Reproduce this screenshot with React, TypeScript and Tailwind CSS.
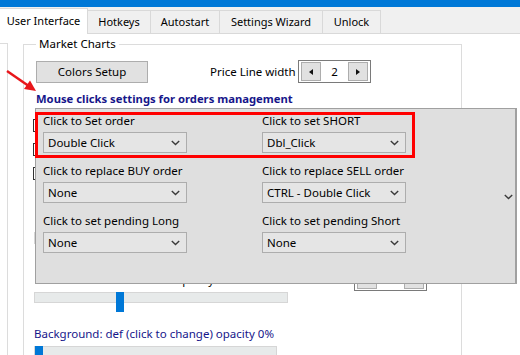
import React from 'react';

const tabs = [
  { label: 'User Interface', w: 'w-[88px]' },
  { label: 'Hotkeys', w: 'w-[63px]' },
  { label: 'Autostart', w: 'w-[69px]' },
  { label: 'Settings Wizard', w: 'w-[103px]' },
  { label: 'Unlock', w: 'w-[58px]' },
];

const rows = [
  ['Click to Set order', 'Double Click', 'Click to set SHORT', 'Dbl_Click'],
  ['Click to replace BUY order', 'None', 'Click to replace SELL order', 'CTRL - Double Click'],
  ['Click to set pending Long', 'None', 'Click to set pending Short', 'None'],
];

const Chevron = () => (
  <svg width="9" height="6" viewBox="0 0 9 6" className="shrink-0">
    <path d="M0.8 1 L4.5 4.6 L8.2 1" fill="none" stroke="#3a3a3a" strokeWidth="1.4" />
  </svg>
);

const Combo = ({ value }: { value: string }) => (
  <div className="mt-[3px] flex h-[21px] w-[144px] items-center justify-between border border-[#adadad] bg-[#e5e5e5] pl-[4px] pr-[6px] text-black">
    <span>{value}</span>
    <Chevron />
  </div>
);

const Slider = ({ track, thumb }: { track: string; thumb: string }) => (
  <div className="relative h-[20px]">
    <div className={`mt-[4px] h-[11px] border border-[#d6d6d6] bg-[#e7eaea] ${track}`} />
    <div className={`absolute top-0 h-[20px] w-[8px] bg-[#0078d7] ${thumb}`} />
  </div>
);

const Spin = ({ value }: { value: string }) => (
  <div className="flex h-[23px] w-[73px] items-center justify-between border border-[#7a7a7a] px-[2px]">
    <div className="flex h-[19px] w-[20px] items-center justify-center border border-[#adadad] bg-[#e1e1e1]">
      <svg width="4" height="6" viewBox="0 0 4 6"><polygon points="4,0 4,6 0,3" fill="#111" /></svg>
    </div>
    <span>{value}</span>
    <div className="flex h-[19px] w-[20px] items-center justify-center border border-[#adadad] bg-[#e1e1e1]">
      <svg width="4" height="6" viewBox="0 0 4 6"><polygon points="0,0 0,6 4,3" fill="#111" /></svg>
    </div>
  </div>
);

export default function App() {
  return (
    <div className="relative h-[355px] w-[520px] overflow-hidden bg-white font-['Noto_Sans',sans-serif] text-[11.5px] text-black">
      <div className="h-[7px] bg-[#0078d7]" />
      <div className="flex h-[27px] items-end border-b border-[#d9d9d9] bg-[#f0f0f0]">
        {tabs.map((t, i) =>
          i === 0 ? (
            <div key={t.label} className={`-mb-px flex h-[26px] items-center justify-center border-t border-r border-[#d9d9d9] bg-white text-[11px] ${t.w}`}>
              {t.label}
            </div>
          ) : (
            <div key={t.label} className={`flex h-[23px] items-center justify-center border-t border-r border-[#d9d9d9] text-[11px] ${t.w}`}>
              {t.label}
            </div>
          )
        )}
      </div>

      <div className="flex">
        <div className="mt-[9px] h-[330px] w-[8px] border-t border-r border-[#dcdcdc]" />
        <fieldset className="ml-[15px] mt-[2px] h-[330px] w-[439px] border border-[#dcdcdc] pl-[12px]">
          <legend className="px-[3px] leading-[16px]">Market Charts</legend>
          <div className="mt-[8px] flex items-center">
            <div className="flex h-[22px] w-[112px] items-center justify-center border border-[#adadad] bg-[#e1e1e1]">Colors Setup</div>
            <span className="ml-[62px] w-[88px]">Price Line width</span>
            <Spin value="2" />
          </div>
          <div className="mt-[8px] text-[11.25px] font-bold leading-[16px] text-[#16168a]">Mouse clicks settings for orders management</div>
          <div className="-ml-[3px] mt-[12px] flex flex-col gap-[11px]">
            {[0, 1, 2].map((c) => (
              <div key={c} className="h-[13px] w-[13px] border border-[#333] bg-white" />
            ))}
          </div>
          <div className="-ml-[2px] mt-[52px] h-[12px] w-[254px] border border-[#d6d6d6] bg-[#e7eaea]" />
          <div className="-ml-[1px] mt-[24px] flex items-center">
            <span className="w-[319px] leading-[16px]">Lines and labels common opacity</span>
            <Spin value="5" />
          </div>
          <div className="-ml-[2px] mt-[-3px]">
            <Slider track="w-[254px]" thumb="left-[82px]" />
          </div>
          <div className="-ml-[2px] mt-[14px] leading-[16px] text-[#16168a]">Background: def (click to change) opacity 0%</div>
          <div className="-ml-[2px]">
            <Slider track="w-[243px]" thumb="left-[1px]" />
          </div>
        </fieldset>
      </div>

      {/* dropdown popup */}
      <div className="absolute left-[35px] top-[108px] h-[176px] w-[482px] border border-r-2 border-[#a0a0a0] bg-[#dfdfdf] pl-[7px] pt-[4px]">
        <div className="flex flex-col gap-[10px]">
          {rows.map((r) => (
            <div key={r[0]} className="flex">
              <div className="w-[219px]">
                <div className="leading-[16px]">{r[0]}</div>
                <Combo value={r[1]} />
              </div>
              <div>
                <div className="leading-[16px]">{r[2]}</div>
                <Combo value={r[3]} />
              </div>
            </div>
          ))}
        </div>
        <div className="absolute left-[468px] top-[85px]"><Chevron /></div>
      </div>

      <div className="absolute left-[35px] top-[112px] h-[46px] w-[380px] border-[3px] border-[#ff0000]" />

      <svg className="absolute left-0 top-[66px]" width="40" height="30" viewBox="0 0 40 30">
        <line x1="7" y1="5" x2="28" y2="19.5" stroke="#e8161b" strokeWidth="2.5" />
        <polygon points="36,25 24,23 30,14.5" fill="#e8161b" />
      </svg>
    </div>
  );
}
